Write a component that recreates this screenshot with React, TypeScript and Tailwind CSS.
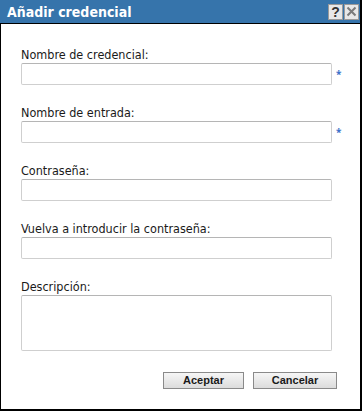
import React from 'react';

const labelFont = { fontFamily: '"DejaVu Sans Condensed", "DejaVu Sans", sans-serif' };

function Field({ label, required, tall }: { label: string; required?: boolean; tall?: boolean }) {
  return (
    <div className="flex flex-col">
      <label className="text-[12.5px] leading-[15px] text-[#1a1a1a] mb-[1px]" style={labelFont}>
        {label}
      </label>
      <div className="flex items-center">
        {tall ? (
          <textarea className="w-[311px] h-[56px] resize-none border border-[#cfcfcf] border-t-[#b5b5b5] rounded-[2px] bg-white outline-none" />
        ) : (
          <input className="w-[311px] h-[22px] border border-[#cfcfcf] border-t-[#b5b5b5] rounded-[2px] bg-white outline-none" />
        )}
        {required && <span className="ml-[4px] text-[10px] leading-none text-[#3b6fc9] font-bold">*</span>}
      </div>
    </div>
  );
}

export default function App() {
  return (
    <div className="w-[362px] h-[411px] bg-black pr-[2px] pb-[2px]">
      <div className="flex flex-col h-full bg-white ml-[1px]">
        <div className="h-[24px] -ml-[1px] bg-[#3674ab] border-b border-black flex items-center justify-between pl-[7px] pr-[1px]">
          <span className="text-white text-[14px] font-bold leading-none" style={labelFont}>
            Añadir credencial
          </span>
          <div className="flex gap-[1px]">
            <div className="w-[15px] h-[16px] bg-[#e8e8e8] border border-[#9a9a9a] flex items-center justify-center text-[14px] font-bold text-[#333] leading-none" style={{ fontFamily: '"Liberation Sans", sans-serif' }}>
              ?
            </div>
            <div className="w-[15px] h-[16px] bg-[#e8e8e8] border border-[#9a9a9a] flex items-center justify-center">
              <svg width="11" height="11" viewBox="0 0 11 11">
                <path d="M1.5 1.5 L9.5 9.5 M9.5 1.5 L1.5 9.5" stroke="#7a7a7a" strokeWidth="2" />
              </svg>
            </div>
          </div>
        </div>
        <div className="flex flex-col pl-[20px] pt-[23px] gap-[20px]">
          <Field label="Nombre de credencial:" required />
          <Field label="Nombre de entrada:" required />
          <Field label="Contraseña:" />
          <Field label="Vuelva a introducir la contraseña:" />
          <Field label="Descripción:" tall />
        </div>
        <div className="flex justify-end gap-[9px] pr-[23px] mt-[21px]">
          {['Aceptar', 'Cancelar'].map(t => (
            <button
              key={t}
              className={`${t === 'Aceptar' ? 'w-[81px]' : 'w-[84px]'} h-[17px] border border-[#8a8a8a] bg-gradient-to-b from-[#f6f6f6] to-[#dcdcdc] text-[11px] font-bold text-[#1a1a1a] leading-none`}
              style={{ fontFamily: '"Liberation Sans", Arial, sans-serif' }}
            >
              {t}
            </button>
          ))}
        </div>
      </div>
    </div>
  );
}
